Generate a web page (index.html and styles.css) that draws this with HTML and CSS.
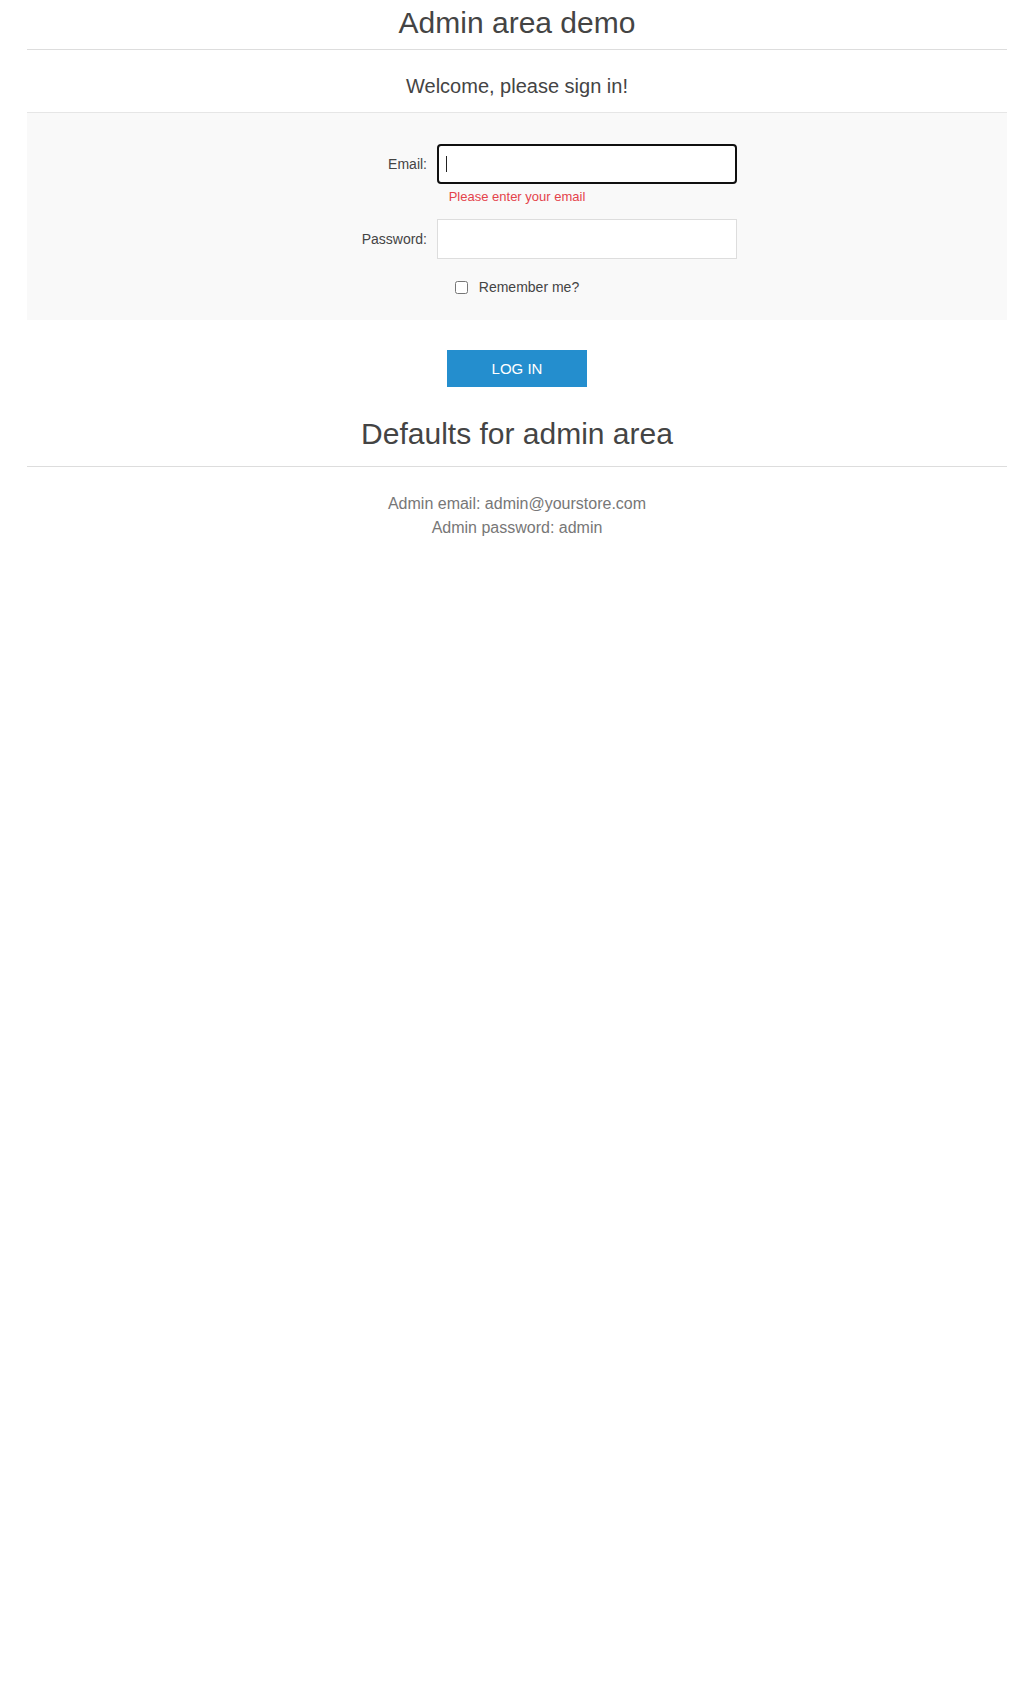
FILE: index.html
```html
<!DOCTYPE html>
<html lang="en">
<head>
<meta charset="utf-8">
<title>Admin area demo</title>
<link rel="stylesheet" href="styles.css">
</head>
<body>
<div class="page">
  <h1 class="page-title">Admin area demo</h1>
  <div class="login">
    <h2 class="login-title">Welcome, please sign in!</h2>
    <form class="login-form">
      <div class="form-fields">
        <div class="inputs">
          <label for="Email">Email:</label>
          <div class="field">
            <input id="Email" type="email" class="input is-focused">
            <span class="caret"></span>
          </div>
        </div>
        <div class="error">Please enter your email</div>
        <div class="inputs inputs-password">
          <label for="Password">Password:</label>
          <div class="field">
            <input id="Password" type="password" class="input">
          </div>
        </div>
        <div class="remember">
          <input id="RememberMe" type="checkbox" class="checkbox">
          <label for="RememberMe">Remember me?</label>
        </div>
      </div>
      <div class="buttons">
        <button type="button" class="login-button">Log in</button>
      </div>
    </form>
  </div>
  <h1 class="page-title defaults-title">Defaults for admin area</h1>
  <div class="defaults-text">
    <p>Admin email: admin@yourstore.com</p>
    <p>Admin password: admin</p>
  </div>
</div>
</body>
</html>
```
FILE: styles.css
```css
body {
  margin: 0;
  background: #fff;
  color: #444;
  font-family: "Liberation Sans", Arial, sans-serif;
}

.page {
  width: 980px;
  margin: 0 auto;
}

.page-title {
  margin: 0;
  padding: 5px 0 8px;
  font-size: 30px;
  line-height: 36px;
  font-weight: normal;
  text-align: center;
  color: #444;
  border-bottom: 1px solid #ddd;
}

.defaults-title {
  padding: 29px 0 14px;
}

.login-title {
  margin: 0;
  padding: 24px 0 14px;
  font-size: 20px;
  line-height: 24px;
  font-weight: normal;
  text-align: center;
  color: #444;
}

.login-form {
  margin: 0;
}

.form-fields {
  background: #f9f9f9;
  border-top: 1px solid #e6e6e6;
  padding: 31px 0 25px;
}

.inputs {
  display: flex;
  align-items: center;
}

.inputs label {
  width: 400px;
  margin-right: 10px;
  text-align: right;
  font-size: 14px;
  line-height: 16px;
  color: #444;
}

.inputs-password {
  margin-top: 15px;
}

.field {
  position: relative;
}

.input {
  display: block;
  box-sizing: border-box;
  width: 300px;
  height: 40px;
  margin: 0;
  padding: 0 8px;
  border: 1px solid #ddd;
  background: #fff;
  font-family: inherit;
  font-size: 14px;
  color: #444;
  outline: none;
}

.input.is-focused {
  border: 2px solid #101010;
  border-radius: 4px;
}

.caret {
  position: absolute;
  left: 9px;
  top: 12px;
  width: 1px;
  height: 16px;
  background: #222;
}

.error {
  margin-top: 5px;
  text-align: center;
  font-size: 13px;
  line-height: 15px;
  color: #e4434b;
}

.remember {
  margin-top: 20px;
  display: flex;
  justify-content: center;
  align-items: center;
  gap: 11px;
  font-size: 14px;
  line-height: 16px;
  color: #444;
}

.checkbox {
  margin: 0;
  width: 13px;
  height: 13px;
}

.buttons {
  padding-top: 30px;
}

.login-button {
  display: block;
  width: 140px;
  height: 37px;
  margin: 0 auto;
  padding: 0;
  border: 0;
  background: #248ece;
  color: #fff;
  font-family: inherit;
  font-size: 15px;
  text-transform: uppercase;
  cursor: pointer;
}

.defaults-text {
  padding-top: 25px;
  text-align: center;
  font-size: 16px;
  line-height: 24px;
  color: #777;
}

.defaults-text p {
  margin: 0;
}
```
